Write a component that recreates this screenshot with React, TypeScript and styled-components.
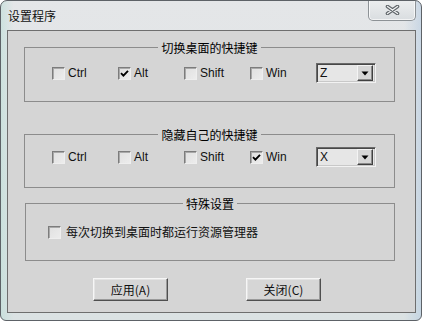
import React from 'react';
import styled, { createGlobalStyle } from 'styled-components';

const Global = createGlobalStyle`
  html, body { margin: 0; padding: 0; background: #ffffff; }
  body { width: 422px; height: 321px; overflow: hidden; }
  #root { width: 422px; height: 321px; }
`;

const Window = styled.div`
  box-sizing: border-box;
  width: 422px;
  height: 321px;
  border: 1px solid #5d6267;
  border-radius: 7px 7px 6px 6px;
  background:
    linear-gradient(90deg, rgba(185, 222, 214, 0.55) 0%, rgba(220, 228, 230, 0) 3%, rgba(220, 228, 230, 0) 96%, rgba(175, 200, 225, 0.5) 100%),
    linear-gradient(180deg, #e4e6e8 0%, #dfe3e5 60%, #dbe2e3 100%);
  display: flex;
  flex-direction: column;
  padding: 0 5px 7px 6px;
  font-family: "Liberation Sans", "Noto Sans CJK SC", sans-serif;
  font-size: 12px;
  color: #000;
  overflow: hidden;
`;

const TitleBar = styled.div`
  height: 29px;
  display: flex;
  justify-content: space-between;
  align-items: flex-start;
  flex: none;
`;

const Title = styled.div`
  margin: 8px 0 0 1px;
  font-family: "Noto Sans CJK SC", sans-serif;
  font-size: 12px;
  line-height: 14px;
  color: #111;
`;

const CloseButton = styled.div`
  box-sizing: border-box;
  width: 48px;
  height: 21px;
  margin-top: -1px;
  border: 1px solid #8d9296;
  border-top: none;
  border-radius: 0 0 5px 5px;
  background: linear-gradient(180deg, #eceeef 0%, #e2e5e7 55%, #d9dde0 100%);
  box-shadow: inset 1px 0 0 #f6f7f8, inset -1px 0 0 #f6f7f8, inset 0 -1px 0 #f2f3f4;
  display: flex;
  align-items: center;
  justify-content: center;
`;

const Client = styled.div`
  box-sizing: border-box;
  height: 283px;
  border: 1px solid #6e6e6e;
  background: #d5d5d5;
  display: flex;
  flex-direction: column;
  flex: none;
`;

const Group = styled.fieldset<{ $top: number; $left: number; $width: number }>`
  box-sizing: border-box;
  margin: ${(p) => p.$top}px 0 0 ${(p) => p.$left}px;
  width: ${(p) => p.$width}px;
  padding: 0;
  border: 1px solid #8c8c8c;
  min-inline-size: 0;
`;

const Legend = styled.legend`
  margin: 0 auto;
  padding: 0 3px;
  font-family: "Noto Sans CJK SC", sans-serif;
  font-size: 12px;
  line-height: 15px;
  color: #000;
`;

const KeyRow = styled.div<{ $mt: number; $mb: number }>`
  display: grid;
  grid-template-columns: repeat(4, 66px) 60px;
  align-items: center;
  height: 20px;
  margin: ${(p) => p.$mt}px 0 ${(p) => p.$mb}px 27px;
`;

const OptionRow = styled.div<{ $mt: number; $mb: number; $pl: number }>`
  display: flex;
  align-items: center;
  height: 14px;
  margin: ${(p) => p.$mt}px 0 ${(p) => p.$mb}px ${(p) => p.$pl}px;
`;

const Option = styled.label<{ $gap: number }>`
  display: flex;
  align-items: center;
  gap: ${(p) => p.$gap}px;
  font-family: "Liberation Sans", "Noto Sans CJK SC", sans-serif;
  font-size: 12px;
  line-height: 14px;
  color: #111;
  white-space: nowrap;
`;

const CjkText = styled.span`
  font-family: "Noto Sans CJK SC", sans-serif;
  font-size: 12px;
  line-height: 14px;
`;

const Box = styled.span`
  box-sizing: border-box;
  width: 13px;
  height: 13px;
  flex: none;
  border: 1px solid;
  border-color: #7c7c7c #eeeeee #eeeeee #7c7c7c;
  box-shadow: inset 1px 1px 0 #a9a9a9;
  background: linear-gradient(135deg, #e0e0e0 0%, #ececec 100%);
  display: flex;
  align-items: center;
  justify-content: center;
`;

const Combo = styled.div`
  box-sizing: border-box;
  width: 60px;
  height: 20px;
  border: 1px solid;
  border-color: #6a6a6a #f2f2f2 #f2f2f2 #6a6a6a;
  box-shadow: inset 1px 1px 0 #474747, inset -1px -1px 0 #c8c8c8;
  background: #e6e6e6;
  display: flex;
  align-items: center;
  justify-content: space-between;
  padding: 2px 2px 2px 3px;
`;

const ComboValue = styled.span`
  font-family: "Liberation Sans", sans-serif;
  font-size: 12px;
  line-height: 14px;
  color: #111;
`;

const DropButton = styled.span`
  box-sizing: border-box;
  width: 16px;
  height: 16px;
  border: 1px solid;
  border-color: #f4f4f4 #404040 #404040 #f4f4f4;
  box-shadow: inset -1px -1px 0 #8a8a8a;
  background: #d6d6d6;
  display: flex;
  align-items: center;
  justify-content: center;
`;

const ButtonRow = styled.div`
  display: flex;
  gap: 78px;
  margin: 17px 0 0 85px;
`;

const Button = styled.button`
  box-sizing: border-box;
  width: 75px;
  height: 23px;
  padding: 0;
  border: 1px solid;
  border-color: #f6f6f6 #4f4f4f #4f4f4f #f6f6f6;
  box-shadow: inset -1px -1px 0 #9a9a9a, inset 1px 1px 0 #e4e4e4;
  background: #d6d6d6;
  font-family: "Noto Sans CJK SC", sans-serif;
  font-size: 12px;
  line-height: 14px;
  color: #111;
`;

const Check = () => (
  <svg width="9" height="9" viewBox="0 0 9 9">
    <path d="M1 4.2 L3.4 6.6 L8 1.8" fill="none" stroke="#000" strokeWidth="1.9" />
  </svg>
);

const Triangle = () => (
  <svg width="8" height="5" viewBox="0 0 8 5">
    <path d="M0.5 0.5 H7.5 L4 4.5 Z" fill="#000" />
  </svg>
);

const CloseGlyph = () => (
  <svg width="15" height="10" viewBox="0 0 15 10">
    <path d="M2.5 1.5 L12.5 8.5 M12.5 1.5 L2.5 8.5" stroke="#5e6468" strokeWidth="3.6" strokeLinecap="round" />
    <path d="M2.5 1.5 L12.5 8.5 M12.5 1.5 L2.5 8.5" stroke="#eef0f1" strokeWidth="1.4" strokeLinecap="round" />
  </svg>
);

type CheckItemProps = { label: string; checked?: boolean };

const CheckItem = ({ label, checked }: CheckItemProps) => (
  <Option $gap={3}>
    <Box>{checked ? <Check /> : null}</Box>
    <span>{label}</span>
  </Option>
);

const KeySelect = ({ value }: { value: string }) => (
  <Combo>
    <ComboValue>{value}</ComboValue>
    <DropButton>
      <Triangle />
    </DropButton>
  </Combo>
);

type KeyGroupProps = {
  title: string;
  checked: string[];
  keyValue: string;
  top: number;
  rowTop: number;
  rowBottom: number;
};

const modifiers = ['Ctrl', 'Alt', 'Shift', 'Win'];

const KeyGroup = ({ title, checked, keyValue, top, rowTop, rowBottom }: KeyGroupProps) => (
  <Group $top={top} $left={16} $width={371}>
    <Legend>{title}</Legend>
    <KeyRow $mt={rowTop} $mb={rowBottom}>
      {modifiers.map((m) => (
        <CheckItem key={m} label={m} checked={checked.includes(m)} />
      ))}
      <KeySelect value={keyValue} />
    </KeyRow>
  </Group>
);

export default function App() {
  return (
    <>
      <Global />
      <Window>
        <TitleBar>
          <Title>设置程序</Title>
          <CloseButton>
            <CloseGlyph />
          </CloseButton>
        </TitleBar>
        <Client>
          <KeyGroup title="切换桌面的快捷键" checked={['Alt']} keyValue="Z" top={9} rowTop={8} rowBottom={18} />
          <KeyGroup title="隐藏自己的快捷键" checked={['Win']} keyValue="X" top={25} rowTop={5} rowBottom={20} />
          <Group $top={8} $left={17} $width={370}>
            <Legend>特殊设置</Legend>
            <OptionRow $mt={14} $mb={21} $pl={22}>
              <Option $gap={5}>
                <Box />
                <CjkText>每次切换到桌面时都运行资源管理器</CjkText>
              </Option>
            </OptionRow>
          </Group>
          <ButtonRow>
            <Button>应用(A)</Button>
            <Button>关闭(C)</Button>
          </ButtonRow>
        </Client>
      </Window>
    </>
  );
}
